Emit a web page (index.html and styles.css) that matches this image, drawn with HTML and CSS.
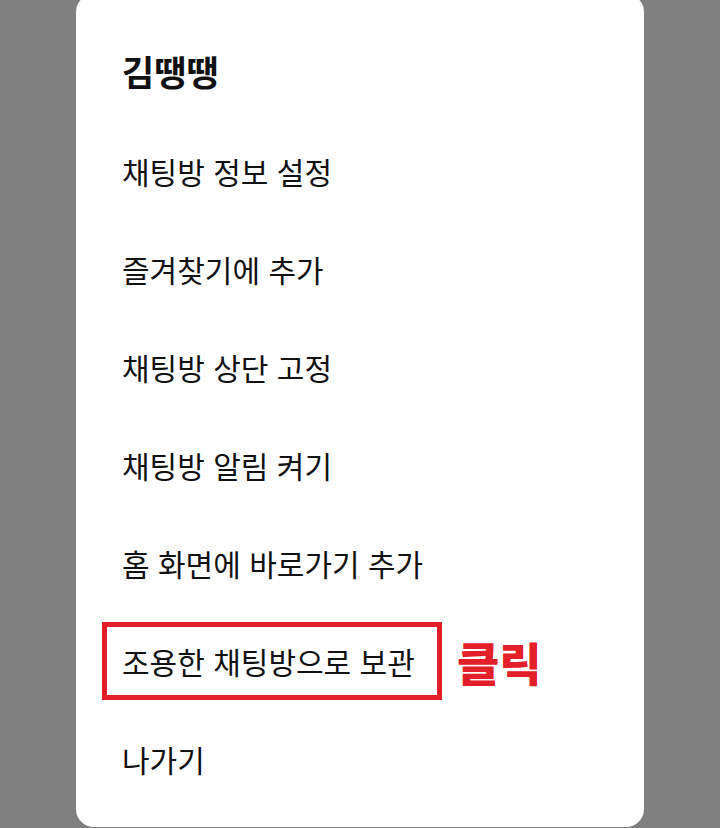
FILE: index.html
```html
<!DOCTYPE html>
<html lang="ko">
<head>
  <meta charset="UTF-8">
  <meta name="viewport" content="width=device-width, initial-scale=1.0">
  <link rel="stylesheet" href="styles.css">
</head>
<body>
  <div class="sheet">
    <div class="title">김땡땡</div>
    <ul class="menu">
      <li class="menu-item">채팅방 정보 설정</li>
      <li class="menu-item">즐겨찾기에 추가</li>
      <li class="menu-item">채팅방 상단 고정</li>
      <li class="menu-item">채팅방 알림 켜기</li>
      <li class="menu-item">홈 화면에 바로가기 추가</li>
      <li class="menu-item marked">
        <span class="mark-box">조용한 채팅방으로 보관</span>
        <span class="mark-label">클릭</span>
      </li>
      <li class="menu-item">나가기</li>
    </ul>
  </div>
</body>
</html>
```

FILE: styles.css
```css
body {
  margin: 0;
  background: #808080;
  font-family: "Noto Sans CJK KR", "Noto Sans", sans-serif;
  overflow: hidden;
}

.sheet {
  width: 568px;
  height: 833px;
  margin: -6px 0 0 76px;
  padding: 28px 0 0 46px;
  box-sizing: border-box;
  background: #ffffff;
  border-radius: 18px;
  color: #111111;
}

.title {
  height: 99px;
  line-height: 98px;
  font-size: 35px;
  font-weight: 700;
}

.menu {
  list-style: none;
  margin: 0;
  padding: 1px 0 0;
}

.menu-item {
  height: 98px;
  display: flex;
  align-items: center;
  font-size: 30px;
}

.marked {
  margin-left: -20px;
}

.mark-box {
  display: flex;
  align-items: center;
  width: 340px;
  height: 78px;
  box-sizing: border-box;
  padding-left: 15px;
  border: 5px solid #e3202a;
}

.mark-label {
  margin-left: 15px;
  font-size: 46px;
  font-weight: 900;
  color: #e3202a;
}
```
